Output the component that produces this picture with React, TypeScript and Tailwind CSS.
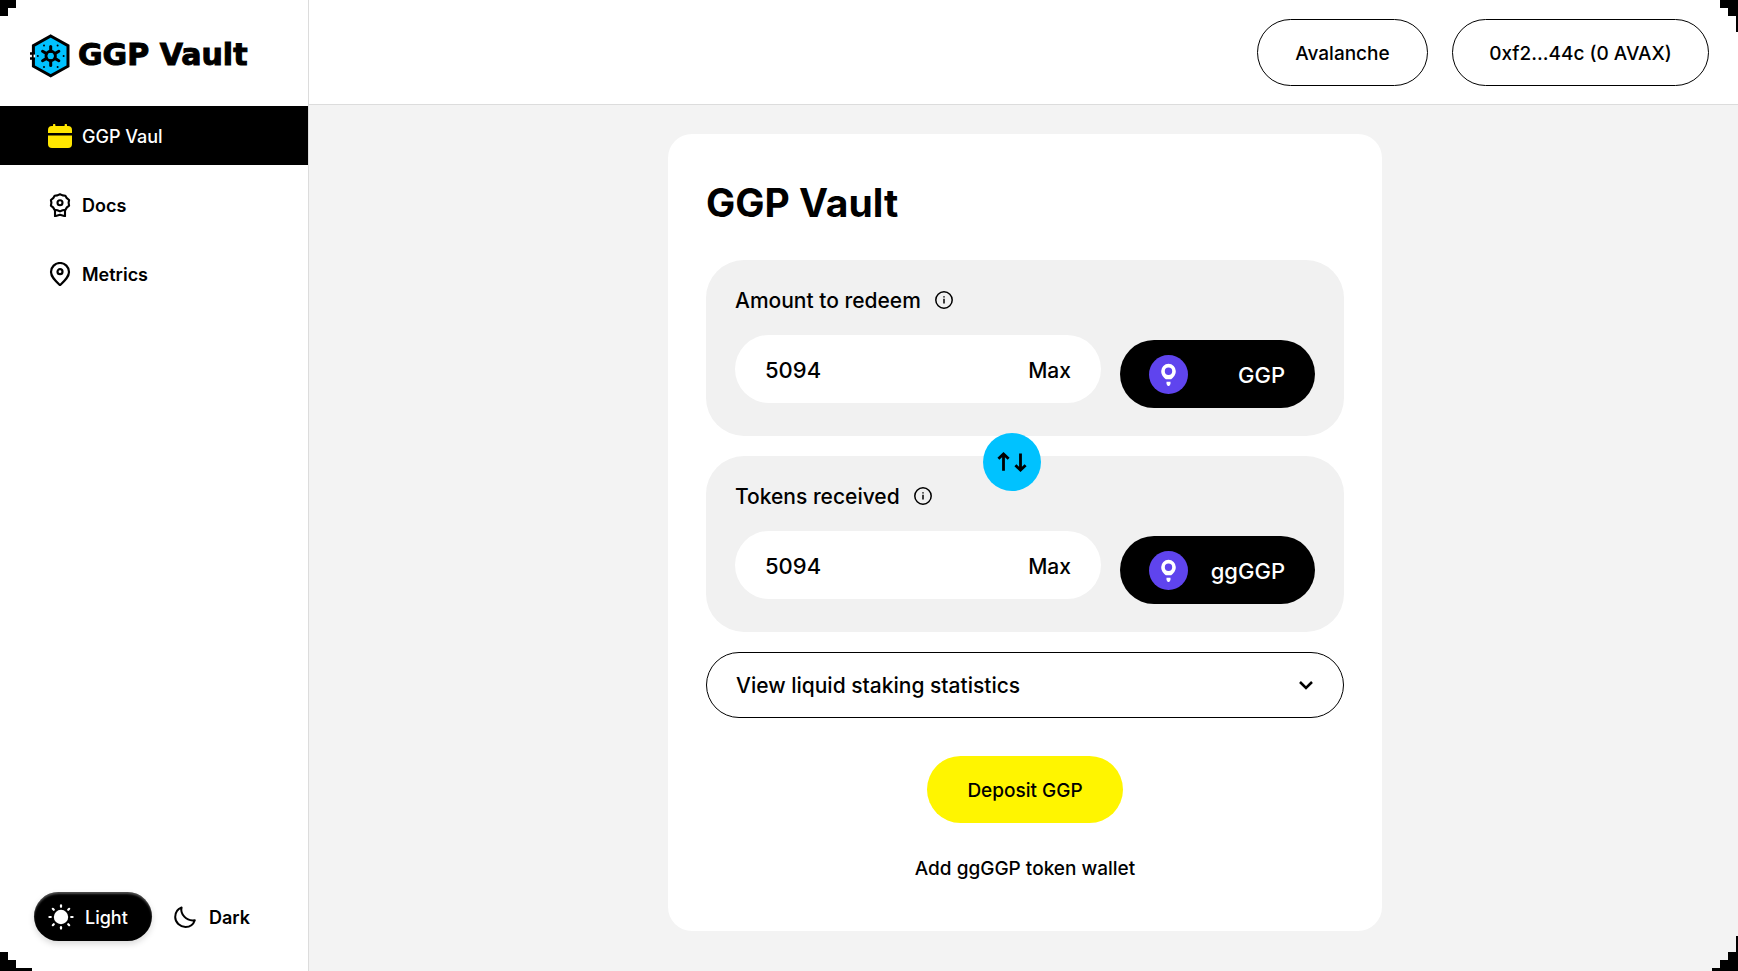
import { useState, type ReactNode } from "react";

const GEAR_ANGLES = [0, 60, 120, 180, 240, 300];
const RAY_ANGLES = [0, 45, 90, 135, 180, 225, 270, 315];

function LogoMark() {
  return (
    <svg viewBox="0 0 40 44" className="h-11 w-10 shrink-0" aria-hidden="true">
      <path d="M20.7 2 L38 11.6 V32.2 L20.7 41.8 L3.4 32.2 V11.6 Z" fill="#00c2ff" stroke="#000" strokeWidth="3" />
      <path d="M0 19.5h5M0 24.5h5" stroke="#000" strokeWidth="2.4" />
      <path d="M4.4 20.6v2.8" stroke="#fff" strokeWidth="1.6" />
      <circle cx="20.7" cy="22" r="4.7" fill="none" stroke="#000" strokeWidth="2.9" />
      {GEAR_ANGLES.map((a) => (
        <path key={a} d="M20.7 17.2V12.6" stroke="#000" strokeWidth="3" strokeLinecap="round" transform={`rotate(${a} 20.7 22)`} />
      ))}
      <g fill="#000">
        <circle cx="14" cy="11.6" r="1" />
        <circle cx="27.6" cy="11.6" r="1" />
        <circle cx="7.8" cy="22" r="1" />
        <circle cx="33.6" cy="22" r="1" />
        <circle cx="14" cy="33" r="1" />
        <circle cx="27.6" cy="33" r="1" />
      </g>
    </svg>
  );
}

function CalendarIcon() {
  return (
    <svg viewBox="0 0 24 24" className="size-6" fill="#ffe600" aria-hidden="true">
      <path d="M0 9V6a4 4 0 0 1 4-4h1V1a1.2 1.2 0 0 1 2.4 0v1h9.2V1a1.2 1.2 0 0 1 2.4 0v1h1a4 4 0 0 1 4 4v3Z" />
      <path d="M0 11.6h24V20a4 4 0 0 1-4 4H4a4 4 0 0 1-4-4Z" />
    </svg>
  );
}

function BadgeIcon() {
  return (
    <svg viewBox="0 0 24 24" className="size-6" fill="none" stroke="#000" strokeWidth="2.1" strokeLinejoin="round" aria-hidden="true">
      <path d="M12 1.2 14.6 2.4 17.4 2.7 18.8 5.2 21.1 7 20.6 9.8 21.1 12.6 18.9 14.4 17.4 16.9 14.6 17.2 12 18.4 9.4 17.2 6.6 16.9 5.1 14.4 2.9 12.6 3.4 9.8 2.9 7 5.2 5.2 6.6 2.7 9.4 2.4Z" />
      <circle cx="12" cy="9.8" r="2.5" />
      <path d="M7 17v6.2l5-1.4 5 1.4V17" />
    </svg>
  );
}

function PinIcon() {
  return (
    <svg viewBox="0 0 24 24" className="size-6" fill="none" stroke="#000" strokeWidth="2.2" strokeLinejoin="round" aria-hidden="true">
      <path d="M12 1a9 9 0 0 1 9 9c0 5-4.5 9-9 13.2C7.5 19 3 15 3 10a9 9 0 0 1 9-9Z" />
      <circle cx="12" cy="9.7" r="2.5" />
    </svg>
  );
}

function SunIcon() {
  return (
    <svg viewBox="0 0 26 26" className="size-[26px]" aria-hidden="true">
      <circle cx="13" cy="13" r="7.2" fill="#fff" />
      {RAY_ANGLES.map((a) => (
        <path key={a} d="M13 1.4v1.4" stroke="#fff" strokeWidth="2.2" strokeLinecap="round" transform={`rotate(${a} 13 13)`} />
      ))}
    </svg>
  );
}

function MoonIcon() {
  return (
    <svg viewBox="0 0 22 22" className="size-[22px]" fill="none" stroke="#000" strokeWidth="2" strokeLinejoin="round" aria-hidden="true">
      <path d="M7.6 1.5C6 7.5 12 15.6 20.8 14.2 19.5 18.2 15.8 20.9 11.5 20.9 6 20.9 1.2 16.6 1.2 11 1.2 6.6 3.7 3 7.6 1.5Z" />
    </svg>
  );
}

function InfoIcon() {
  return (
    <svg viewBox="0 0 18 18" className="size-[18px]" fill="none" stroke="#000" strokeWidth="1.5" aria-hidden="true">
      <circle cx="9" cy="9" r="8.2" />
      <path d="M9 7.8v4.8M9 5.2v1.3" />
    </svg>
  );
}

function TokenIcon() {
  return (
    <svg viewBox="0 0 39 39" className="size-[39px] shrink-0" aria-hidden="true">
      <circle cx="19.5" cy="19.5" r="19.5" fill="#5f44ee" />
      <path fillRule="evenodd" fill="#fff" d="M19.5 8.8a7.3 7.3 0 0 1 7.3 7.3c0 4-2.3 6.3-4.6 8.200h-5.400c-2.300-1.900-4.600-4.200-4.600-8.200A7.300 7.300 0 0 1 19.500 8.800Zm0 3.800a3.700 3.700 0 1 0 0 7.400 3.700 3.700 0 0 0 0-7.400Z" />
      <path d="M17.5 26.7h4v2.200l-1.300 2h-1.400l-1.300-2Z" fill="#fff" />
    </svg>
  );
}

function SwapIcon() {
  return (
    <svg viewBox="0 0 30 20" className="h-5 w-[30px]" fill="none" stroke="#000" strokeWidth="2.8" aria-hidden="true">
      <path d="M6.5 18.800V2.500M1.400 6.800 6.500 2 11.600 6.800" />
      <path d="M23.5 1.600v16M18.400 13.300l5.100 4.800 5.100-4.800" />
    </svg>
  );
}

function NavItem({ icon, label, active = false }: { icon: ReactNode; label: string; active?: boolean }) {
  return (
    <a
      href="#"
      aria-current={active ? "page" : undefined}
      className={
        active
          ? "flex h-[59px] items-center gap-2.5 bg-black pl-12 text-lg font-medium text-white"
          : "flex h-[59px] items-center gap-2.5 pl-12 text-lg font-semibold text-black"
      }
    >
      {icon}
      <span className="pt-0.5">{label}</span>
    </a>
  );
}

function AmountPanel({ id, label, token, value, onChange, children }: {
  id: string;
  label: string;
  token: string;
  value: string;
  onChange: (value: string) => void;
  children?: ReactNode;
}) {
  return (
    <section className="relative rounded-[38px] bg-[#f1f1f1] px-[29px] pt-6 pb-7">
      {children}
      <div className="flex h-8 items-center gap-3.5">
        <label htmlFor={id} className="pt-0.5 text-[21px] font-medium">{label}</label>
        <button type="button" aria-label={`About ${label}`}><InfoIcon /></button>
      </div>
      <div className="mt-[19px] flex items-start gap-[19px]">
        <div className="flex h-[68px] min-w-0 flex-1 items-center rounded-full bg-white px-[30px] pt-0.5">
          <input id={id} value={value} inputMode="numeric" onChange={(e) => onChange(e.target.value)} className="min-w-0 flex-1 text-[22px] font-medium outline-none" />
          <button type="button" className="pt-0.5 text-[21px] font-medium">Max</button>
        </div>
        <button type="button" className="mt-[5px] flex h-[68px] w-[195px] items-center justify-between rounded-full bg-black pr-[30px] pl-[29px] text-[22px] font-medium text-white">
          <TokenIcon />
          <span className="pt-0.5">{token}</span>
        </button>
      </div>
    </section>
  );
}

function Corners() {
  return (
    <div aria-hidden="true">
      <svg className="absolute top-0 left-0 h-4 w-4" viewBox="0 0 16 16"><path d="M0 0h16v8H8v8H0Z" /></svg>
      <svg className="absolute top-0 right-0 h-8 w-[18px]" viewBox="0 0 18 32"><path d="M0 0h18v32h-2V16H8V8H0Z" /></svg>
      <svg className="absolute bottom-0 left-0 h-[19px] w-8" viewBox="0 0 32 19"><path d="M0 0h8v8h8v8h16v3H0Z" /></svg>
      <svg className="absolute right-0 bottom-0 h-[35px] w-[26px]" viewBox="0 0 26 35"><path d="M24 0h2v35H0v-3h8v-8h8v-8h8Z" /></svg>
    </div>
  );
}

export default function App() {
  const [amount, setAmount] = useState("5094");
  const [received, setReceived] = useState("5094");

  return (
    <div className="relative flex min-h-screen bg-[#f3f3f3] font-['Inter',sans-serif] text-black">
      <aside className="flex w-[309px] shrink-0 flex-col border-r border-[#dcdcdc] bg-white">
        <a href="#" className="flex h-[106px] items-center gap-2 pt-1.5 pl-[30px]">
          <LogoMark />
          <span className="pb-0.5 font-['DejaVu_Sans',sans-serif] text-[30px] leading-8 font-bold [-webkit-text-stroke:1px_#000]">GGP Vault</span>
        </a>
        <nav className="flex flex-col gap-2.5">
          <NavItem active icon={<CalendarIcon />} label="GGP Vaul" />
          <NavItem icon={<BadgeIcon />} label="Docs" />
          <NavItem icon={<PinIcon />} label="Metrics" />
        </nav>
        <div className="mt-auto flex items-center gap-[22px] pb-[30px] pl-[34px] text-lg font-medium">
          <button type="button" aria-pressed="true" className="flex h-[49px] w-[118px] items-center gap-[11px] rounded-full bg-black pl-3.5 text-white shadow-[0_3px_6px_rgba(0,0,0,0.15),inset_0_2px_2px_rgba(255,255,255,0.3)]">
            <SunIcon />
            <span className="pt-0.5">Light</span>
          </button>
          <button type="button" aria-pressed="false" className="flex h-[49px] items-center gap-[13px] font-semibold">
            <MoonIcon />
            <span className="pt-0.5">Dark</span>
          </button>
        </div>
      </aside>

      <div className="flex min-w-0 flex-1 flex-col">
        <header className="flex h-[105px] items-center justify-end gap-6 border-b border-[#dcdcdc] bg-white pt-px pr-[29px] text-[19px] font-medium">
          <button type="button" className="h-[67px] min-w-[171px] rounded-full border border-black pt-1">Avalanche</button>
          <button type="button" className="h-[67px] min-w-[257px] rounded-full border border-black pt-1">0xf2...44c (0 AVAX)</button>
        </header>

        <main className="flex flex-1 items-start justify-center pt-[29px] pb-10 pl-[3px]">
          <div className="flex w-full max-w-[714px] flex-col rounded-3xl bg-white px-[38px] pt-[45px] pb-12">
            <h1 className="text-[39px] leading-[48px] font-bold">GGP Vault</h1>
            <div className="mt-[33px] flex flex-col gap-5">
              <AmountPanel id="redeem" label="Amount to redeem" token="GGP" value={amount} onChange={setAmount} />
              <AmountPanel id="received" label="Tokens received" token="ggGGP" value={received} onChange={setReceived}>
                <button type="button" aria-label="Swap direction" className="absolute -top-[23px] left-[277px] flex size-[58px] items-center justify-center rounded-full bg-[#00c2ff]">
                  <SwapIcon />
                </button>
              </AmountPanel>
              <button type="button" aria-expanded="false" className="flex h-[66px] items-center justify-between rounded-full border border-black px-[29px] text-[21px] font-medium">
                <span className="pt-0.5">View liquid staking statistics</span>
                <svg viewBox="0 0 16 16" className="size-4" fill="none" stroke="#000" strokeWidth="2.5" aria-hidden="true">
                  <path d="m2 5 6 6 6-6" />
                </svg>
              </button>
            </div>
            <button type="button" className="mt-[38px] h-[67px] min-w-[196px] self-center rounded-full bg-[#fff500] px-[38px] pt-1 text-[19px] font-medium">Deposit GGP</button>
            <a href="#" className="mt-[31px] self-center pt-px text-[19px] leading-7 font-medium">Add ggGGP token wallet</a>
          </div>
        </main>
      </div>
      <Corners />
    </div>
  );
}
